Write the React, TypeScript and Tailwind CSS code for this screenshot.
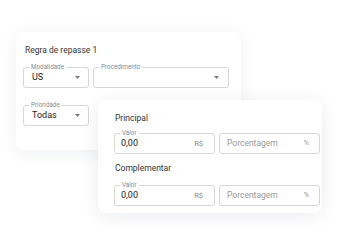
import type { ReactNode } from "react";

const Caret = () => (
  <svg width="5" height="3" viewBox="0 0 5 3" className="shrink-0">
    <path d="M0 0 L5 0 L2.5 3 Z" fill="#7a7a7a" />
  </svg>
);

type FieldProps = {
  label?: string;
  className: string;
  children?: ReactNode;
};

const Field = (props: FieldProps) => (
  <div
    className={`relative flex h-[21px] items-center rounded-[3px] border border-[#d6d6d6] bg-white ${props.className}`}
  >
    {props.label && (
      <span className="absolute -top-[5px] left-[5px] bg-white px-[2px] text-[6.3px] leading-[8px] text-[#8a8a8a]">
        {props.label}
      </span>
    )}
    {props.children}
  </div>
);

const SelectField = ({ label, value, width, pr }: { label: string; value?: string; width: string; pr: string }) => (
  <Field label={label} className={`${width} ${pr} justify-between pl-[8px]`}>
    <span className="text-[9px] leading-none text-[#222]">{value}</span>
    <Caret />
  </Field>
);

const MoneyRow = () => (
  <div className="flex gap-[4px]">
    <Field label="Valor" className="w-[101px] justify-between pl-[6px] pr-[11px]">
      <span className="text-[9px] leading-none text-[#222]">0,00</span>
      <span className="text-[7.5px] leading-none text-[#8a8a8a]">R$</span>
    </Field>
    <Field className="w-[101px] justify-between pl-[7px] pr-[10px]">
      <span className="text-[8.5px] leading-none text-[#9a9a9a]">Porcentagem</span>
      <span className="text-[7px] leading-none text-[#9a9a9a]">%</span>
    </Field>
  </div>
);

export default function App() {
  return (
    <div className="relative h-[242px] w-[338px] overflow-hidden bg-white font-['Roboto',sans-serif]">
      <div className="absolute left-[16px] top-[32px] flex h-[118px] w-[225px] flex-col rounded-[8px] bg-white pl-[7px] pt-[13px] shadow-[0_3px_18px_rgba(30,40,80,0.07)]">
        <div className="pl-[2px] text-[8.5px] leading-[10px] text-[#333]">Regra de repasse 1</div>
        <div className="mt-[12px] flex gap-[4px]">
          <SelectField label="Modalidade" value="US" width="w-[66px]" pr="pr-[8px]" />
          <SelectField label="Procedimento" width="w-[136px]" pr="pr-[9px]" />
        </div>
        <div className="mt-[17px] flex">
          <SelectField label="Prioridade" value="Todas" width="w-[66px]" pr="pr-[8px]" />
        </div>
      </div>
      <div className="absolute left-[98px] top-[100px] flex h-[113px] w-[224px] flex-col rounded-[8px] bg-white pl-[16px] pt-[13px] shadow-[0_3px_18px_rgba(30,40,80,0.09)]">
        <div className="pl-[1px] text-[8.5px] leading-[10px] text-[#333]">Principal</div>
        <div className="mt-[10px]">
          <MoneyRow />
        </div>
        <div className="mt-[9px] pl-[1px] text-[8.5px] leading-[10px] text-[#333]">Complementar</div>
        <div className="mt-[12px]">
          <MoneyRow />
        </div>
      </div>
    </div>
  );
}
